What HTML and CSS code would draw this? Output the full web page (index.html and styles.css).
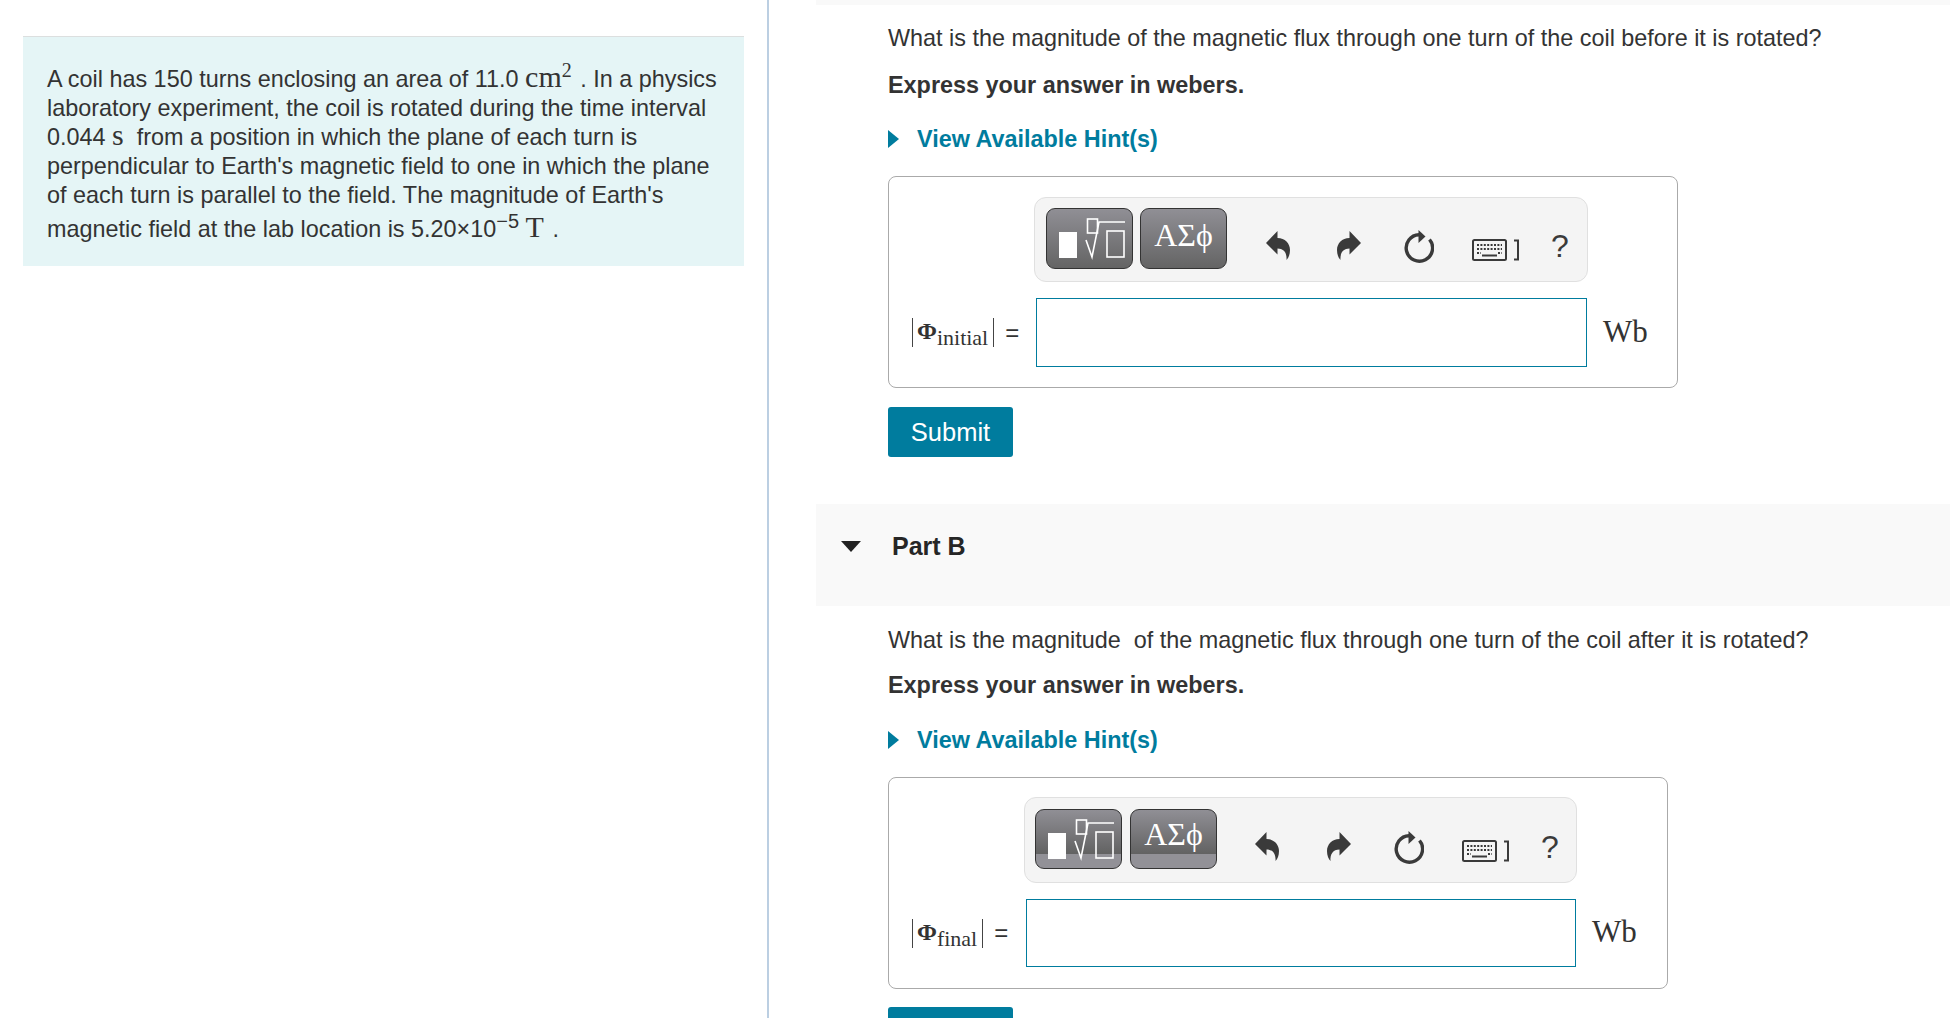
FILE: index.html
```html
<!DOCTYPE html>
<html lang="en-US">
<head>
  <meta charset="UTF-8">
  <title>Part B</title>
  <link rel="stylesheet" href="styles.css">
</head>
<body>
<svg class="defs" width="0" height="0">
  <symbol id="i-undo" viewBox="0 0 24 29">
    <path d="M0 12 L11.5 0 V7 C19 7 24 12.5 24 19 C24 23.5 22.5 27 20.5 29 C21 22 18 17.5 11.5 17.5 V23.5 Z"/>
  </symbol>
  <symbol id="i-reset" viewBox="0 0 30 33">
    <path class="ring" d="M25.5 9.5 A13.2 13.2 0 1 1 15 4.8"/>
    <path d="M14.5 0 L21.5 6.5 L14.5 13 Z"/>
  </symbol>
  <symbol id="i-keys" viewBox="0 0 48 22">
    <rect class="kb" x="1" y="1" width="33" height="20" rx="1.5"/>
    <path class="kd" d="M5 6 H30 M5 10 H30 M5 14 H9 M26 14 H30"/>
    <path class="kl" d="M10 16.5 H25"/>
    <path class="kb" d="M42 1.5 H46 V20.5 H42"/>
  </symbol>
  <symbol id="i-tmpl" viewBox="0 0 87 61">
    <rect class="w" x="13" y="24" width="18" height="26"/>
    <rect class="ol" x="41.5" y="11" width="10" height="14"/>
    <path class="ol" d="M40 32 L46 49 L53 14 H79"/>
    <rect class="ol" x="61" y="23" width="17" height="26"/>
  </symbol>
</svg>

<div class="page">
  <aside class="side">
    <div class="intro">
      <p>A coil has 150 turns enclosing an area of 11.0 <span class="m">cm<sup>2</sup></span> . In a physics laboratory experiment, the coil is rotated during the time interval 0.044 <span class="m tight">s</span>&nbsp; from a position in which the plane of each turn is perpendicular to Earth's magnetic field to one in which the plane of each turn is parallel to the field. The magnitude of Earth's magnetic field at the lab location is 5.20×10<sup class="sans">−5</sup> <span class="m">T</span> .</p>
    </div>
  </aside>

  <main class="main">
    <div class="part-top"></div>
    <section class="body body-a">
      <p class="q">What is the magnitude of the magnetic flux through one turn of the coil before it is rotated?</p>
      <p class="q strong">Express your answer in webers.</p>
      <a class="hint"><span class="tri"></span>View Available Hint(s)</a>
      <div class="card card-a">
        <div class="toolbar">
          <button class="tb"><svg class="tmpl"><use href="#i-tmpl"/></svg></button>
          <button class="tb"><span class="greek">ΑΣϕ</span></button>
          <svg class="ic undo"><use href="#i-undo"/></svg>
          <svg class="ic redo"><use href="#i-undo"/></svg>
          <svg class="ic reset"><use href="#i-reset"/></svg>
          <svg class="ic keys"><use href="#i-keys"/></svg>
          <span class="help">?</span>
        </div>
        <div class="label"><span class="abs"><span class="phi">Φ</span><sub>initial</sub></span><span class="eq">=</span></div>
        <input class="answer" type="text">
        <div class="unit">Wb</div>
      </div>
      <button class="submit">Submit</button>
    </section>

    <div class="part-head"><span class="down"></span><h3>Part B</h3></div>

    <section class="body body-b">
      <p class="q">What is the magnitude&nbsp; of the magnetic flux through one turn of the coil after it is rotated?</p>
      <p class="q strong">Express your answer in webers.</p>
      <a class="hint"><span class="tri"></span>View Available Hint(s)</a>
      <div class="card card-b">
        <div class="toolbar">
          <button class="tb on"><svg class="tmpl"><use href="#i-tmpl"/></svg></button>
          <button class="tb on"><span class="greek">ΑΣϕ</span></button>
          <svg class="ic undo"><use href="#i-undo"/></svg>
          <svg class="ic redo"><use href="#i-undo"/></svg>
          <svg class="ic reset"><use href="#i-reset"/></svg>
          <svg class="ic keys"><use href="#i-keys"/></svg>
          <span class="help">?</span>
        </div>
        <div class="label"><span class="abs"><span class="phi">Φ</span><sub>final</sub></span><span class="eq">=</span></div>
        <input class="answer" type="text">
        <div class="unit">Wb</div>
      </div>
      <button class="submit"></button>
    </section>
  </main>
</div>
</body>
</html>
```
FILE: styles.css
```css
html, body {
  margin: 0;
  height: 100%;
  overflow: hidden;
  background: #fff;
}
body {
  font: 23.4px "Liberation Sans", Arial, sans-serif;
  color: #333;
}
.defs { position: absolute; }

.page {
  display: flex;
  height: 1018px;
  overflow: hidden;
}

/* left column */
.side {
  width: 744px;
  flex: none;
  border-right: 2px solid #bccfe2;
  padding: 36px 0 0 23px;
}
.intro {
  width: 721px;
  height: 230px;
  box-sizing: border-box;
  background: #e5f5f6;
  border-top: 1px solid #dcdfdf;
  padding: 23px 24px 0;
}
.intro p {
  margin: 0;
  line-height: 28.9px;
}
.intro sup {
  line-height: 1;
  vertical-align: 10px;
}
.intro sup.sans {
  font-family: "Liberation Sans", Arial, sans-serif;
  font-size: 20px;
  line-height: 1.1;
  vertical-align: 9px;
}
.m { font-family: "Liberation Serif", "Times New Roman", serif; font-size: 30px; line-height: 0; margin-right: 2px; }
.m sup { font-size: 20px; }
.m.tight { margin-right: 0; }

/* right column */
.main {
  flex: 1;
  min-width: 0;
  margin-left: 47px;
}
.part-top {
  height: 5px;
  background: #f9f9f9;
}
.body { padding-left: 72px; }
.body-a { padding-top: 19px; }
.body-b { padding-top: 20px; }
.q {
  margin: 0 0 19px;
  line-height: 28px;
}
.body-b .q { margin-bottom: 17px; }
.q.strong { font-weight: bold; margin-bottom: 0; }
.hint {
  display: flex;
  align-items: center;
  margin-top: 26px;
  height: 28px;
  font-weight: bold;
  color: #007c9e;
}
.body-b .hint { margin-top: 27px; }
.tri {
  width: 0;
  height: 0;
  border-left: 11px solid #007c9e;
  border-top: 9.5px solid transparent;
  border-bottom: 9.5px solid transparent;
  margin-right: 18px;
}

.card {
  display: grid;
  box-sizing: border-box;
  margin-top: 23px;
  border: 1px solid #aaa;
  border-radius: 8px;
  row-gap: 16px;
}
.card-a {
  width: 790px;
  height: 212px;
  padding-top: 20px;
  grid-template-columns: 147px 551px 1fr;
  grid-template-rows: 85px 69px;
}
.card-b {
  width: 780px;
  height: 212px;
  padding-top: 19px;
  grid-template-columns: 137px 550px 1fr;
  grid-template-rows: 86px 68px;
}

.toolbar {
  grid-column: 2;
  display: flex;
  align-items: flex-start;
  box-sizing: border-box;
  margin-left: -2px;
  margin-right: -1px;
  padding: 10px 0 0 11px;
  background: #f4f4f4;
  border: 1px solid #e0e0e0;
  border-radius: 12px;
}
.card-b .toolbar { padding: 11px 0 0 10px; }
.tb {
  width: 87px;
  height: 61px;
  margin: 0 7px 0 0;
  padding: 0;
  display: flex;
  align-items: center;
  justify-content: center;
  border: 1px solid #333;
  border-radius: 9px;
  background: linear-gradient(#908f95, #646464);
}
.tb.on {
  height: 60px;
  margin-right: 8px;
  background: linear-gradient(#908f95 0, #626262 76%, #929197 76%);
}
.tmpl { width: 87px; height: 61px; flex: none; }
.w { fill: #fff; }
.ol { fill: none; stroke: #fff; stroke-width: 1.6; }
.greek {
  font: 32px "Liberation Serif", "Times New Roman", serif;
  color: #fff;
  position: relative;
  top: -3px;
}
.tb.on .greek { top: -5px; }

.ic { fill: #3a3a3a; flex: none; }
.undo { width: 24px; height: 29px; margin: 23px 0 0 32px; }
.card-b .undo { margin-left: 30px; }
.redo { width: 24px; height: 29px; margin: 23px 0 0 47px; transform: scaleX(-1); }
.card-b .redo { margin-left: 48px; }
.reset { width: 30px; height: 33px; margin: 22px 0 0 43px; }
.ring { fill: none; stroke: #3a3a3a; stroke-width: 3.4; }
.keys { width: 48px; height: 22px; margin: 31px 0 0 38px; }
.kb { fill: none; stroke: #3a3a3a; stroke-width: 2; }
.kd { fill: none; stroke: #3a3a3a; stroke-width: 2.2; stroke-dasharray: 2 1.4; }
.kl { fill: none; stroke: #3a3a3a; stroke-width: 2; }
.help {
  margin: 20px 0 0 31px;
  font-size: 32px;
  line-height: 37px;
  color: #3a3a3a;
}

.label {
  grid-column: 1;
  grid-row: 2;
  display: flex;
  align-items: center;
  padding-left: 23px;
  font-family: "Liberation Serif", "Times New Roman", serif;
}
.abs {
  display: flex;
  align-items: baseline;
  height: 29px;
  line-height: 27px;
  padding: 0 5px 0 4px;
  border-left: 1.5px solid #444;
  border-right: 1.5px solid #444;
}
.phi { font-size: 24px; font-weight: bold; color: #333; }
.abs sub {
  font-size: 22px;
  line-height: 0;
  vertical-align: baseline;
  position: relative;
  top: 6px;
}
.eq {
  margin-left: 11px;
  font: 24px "Liberation Sans", Arial, sans-serif;
}
.answer {
  grid-column: 2;
  grid-row: 2;
  box-sizing: border-box;
  width: 100%;
  height: 100%;
  margin: 0;
  border: 1.5px solid #007c9e;
  background: #fff;
  outline: none;
}
.unit {
  grid-column: 3;
  grid-row: 2;
  align-self: center;
  padding: 0 0 2px 16px;
  font: 31px "Liberation Serif", "Times New Roman", serif;
  color: #333;
}

.submit {
  display: block;
  width: 125px;
  height: 50px;
  margin: 19px 0 0;
  padding: 0;
  border: none;
  border-radius: 3px;
  background: #007c9e;
  color: #fff;
  font: 25.5px "Liberation Sans", Arial, sans-serif;
}
.body-b .submit { margin-top: 18px; }

.part-head {
  display: flex;
  align-items: center;
  box-sizing: border-box;
  height: 102px;
  margin-top: 47px;
  padding: 0 0 18px 25px;
  background: #f9f9f9;
}
.down {
  width: 0;
  height: 0;
  border-top: 11px solid #222;
  border-left: 10px solid transparent;
  border-right: 10px solid transparent;
  margin-right: 31px;
}
.part-head h3 {
  margin: 0;
  font-size: 25px;
  color: #262626;
}
```
